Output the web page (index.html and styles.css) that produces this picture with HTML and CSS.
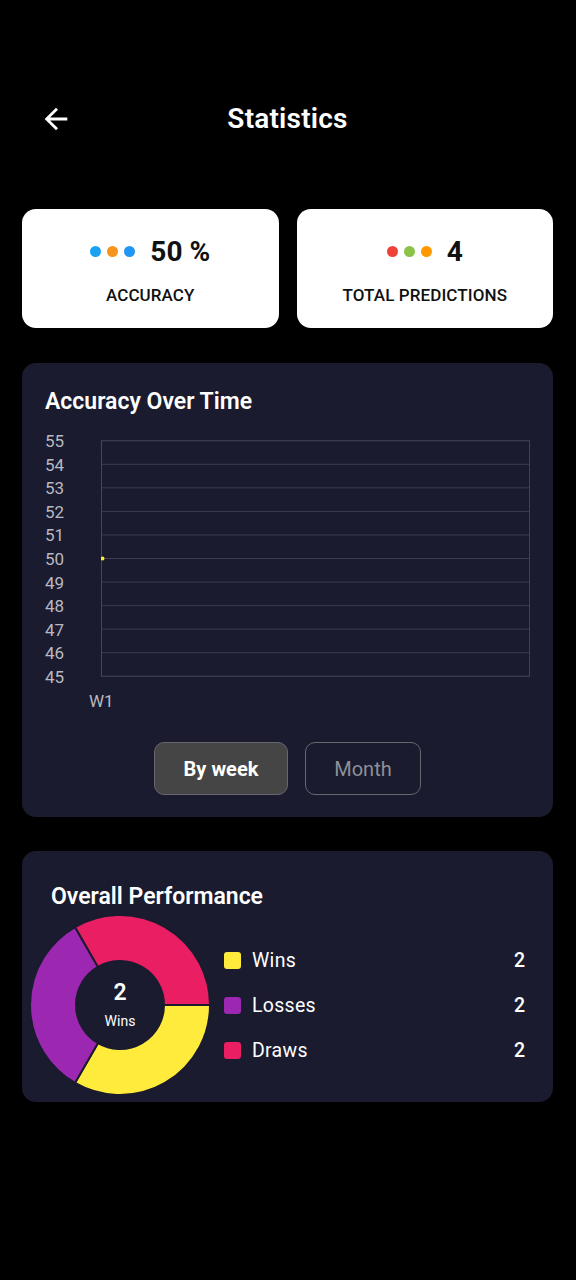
FILE: index.html
```html
<!DOCTYPE html>
<html lang="en">
<head>
    <meta charset="UTF-8">
    <meta name="viewport" content="width=device-width, initial-scale=1.0">
    <title>Statistics</title>
    <link rel="stylesheet" href="styles.css">
</head>
<body>
    <div class="page">
        <header class="topbar">
            <button class="back" aria-label="Back">
                <svg width="34" height="34" viewBox="0 0 24 24"><path fill="#fff" d="M20 11H7.83l5.59-5.59L12 4l-8 8 8 8 1.41-1.41L7.83 13H20v-2z"/></svg>
            </button>
            <h1>Statistics</h1>
        </header>

        <div class="summary">
            <div class="summary-card">
                <div class="summary-value">
                    <span class="dots">
                        <i style="background:#1ba1f2"></i><i style="background:#f7941d"></i><i style="background:#2196f3"></i>
                    </span>
                    <span>50 %</span>
                </div>
                <div class="summary-label">ACCURACY</div>
            </div>
            <div class="summary-card">
                <div class="summary-value">
                    <span class="dots">
                        <i style="background:#f0403a"></i><i style="background:#8bc34a"></i><i style="background:#ff9800"></i>
                    </span>
                    <span>4</span>
                </div>
                <div class="summary-label">TOTAL PREDICTIONS</div>
            </div>
        </div>

        <section class="panel chart-panel">
            <h2>Accuracy Over Time</h2>
            <div class="chart-row">
                <div class="y-axis">
                    <span>55</span><span>54</span><span>53</span><span>52</span><span>51</span><span>50</span><span>49</span><span>48</span><span>47</span><span>46</span><span>45</span>
                </div>
                <svg class="plot" width="430" height="237" viewBox="0 0 430 237">
                    <g stroke="#3b3c52" stroke-width="1">
                        <line x1="0" y1="24.1" x2="430" y2="24.1"/>
                        <line x1="0" y1="47.7" x2="430" y2="47.7"/>
                        <line x1="0" y1="71.3" x2="430" y2="71.3"/>
                        <line x1="0" y1="94.9" x2="430" y2="94.9"/>
                        <line x1="0" y1="118.5" x2="430" y2="118.5"/>
                        <line x1="0" y1="142.1" x2="430" y2="142.1"/>
                        <line x1="0" y1="165.7" x2="430" y2="165.7"/>
                        <line x1="0" y1="189.3" x2="430" y2="189.3"/>
                        <line x1="0" y1="212.9" x2="430" y2="212.9"/>
                    </g>
                    <rect x="0.5" y="0.5" width="429" height="236" fill="none" stroke="#45465a"/>
                    <circle cx="1.5" cy="118.5" r="2" fill="#ffeb3b"/>
                </svg>
            </div>
            <div class="x-axis">W1</div>
            <div class="range">
                <button class="range-btn active">By week</button>
                <button class="range-btn">Month</button>
            </div>
        </section>

        <section class="panel perf-panel">
            <h2>Overall Performance</h2>
            <div class="perf-body">
                <div class="donut">
                    <svg width="182" height="182" viewBox="-1 -1 182 182">
                        <g stroke="#1a1b2e" stroke-width="2">
                            <path fill="#ffeb3b" d="M180 90 A90 90 0 0 1 45 167.94 L68 128.1 A44 44 0 0 0 134 90 Z"/>
                            <path fill="#9c27b0" d="M45 167.94 A90 90 0 0 1 45 12.06 L68 51.9 A44 44 0 0 0 68 128.1 Z"/>
                            <path fill="#e91e63" d="M45 12.06 A90 90 0 0 1 180 90 L134 90 A44 44 0 0 0 68 51.9 Z"/>
                        </g>
                    </svg>
                    <div class="donut-center">
                        <strong>2</strong>
                        <span>Wins</span>
                    </div>
                </div>
                <ul class="legend">
                    <li><i style="background:#ffeb3b"></i><span class="legend-name">Wins</span><span class="legend-val">2</span></li>
                    <li><i style="background:#9c27b0"></i><span class="legend-name">Losses</span><span class="legend-val">2</span></li>
                    <li><i style="background:#e91e63"></i><span class="legend-name">Draws</span><span class="legend-val">2</span></li>
                </ul>
            </div>
        </section>
    </div>
</body>
</html>
```

FILE: styles.css
```css
body {
    margin: 0;
    background-color: #000;
    color: #fff;
    font-family: Roboto, "Noto Sans", Arial, sans-serif;
}
.page {
    padding: 90px 23px 40px 22px;
}
.topbar {
    position: relative;
    height: 56px;
    display: flex;
    align-items: center;
    justify-content: center;
}
.topbar h1 {
    margin: 0;
    font-size: 28px;
    font-weight: 600;
    letter-spacing: 0.2px;
}
.back {
    position: absolute;
    left: 17px;
    top: 12px;
    padding: 0;
    border: 0;
    background: none;
    display: flex;
}
.summary {
    margin-top: 63px;
    display: grid;
    grid-template-columns: 1fr 1fr;
    gap: 18px;
}
.summary-card {
    background-color: #fff;
    color: #111;
    border-radius: 14px;
    height: 119px;
    display: flex;
    flex-direction: column;
    align-items: center;
}
.summary-value {
    margin-top: 26px;
    height: 32px;
    display: flex;
    align-items: center;
    gap: 15px;
    font-size: 28px;
    font-weight: 700;
}
.dots {
    display: flex;
    gap: 6px;
}
.dots i {
    width: 11px;
    height: 11px;
    border-radius: 50%;
}
.summary-label {
    margin-top: 18px;
    font-size: 17px;
    font-weight: 500;
    letter-spacing: 0.1px;
}
.panel {
    background-color: #1a1b2e;
    border-radius: 14px;
}
.panel h2 {
    margin: 0;
    font-size: 23px;
    font-weight: 600;
    line-height: 26px;
}
.chart-panel {
    margin-top: 35px;
    padding: 26px 23px 22px 23px;
}
.chart-row {
    display: flex;
    margin-top: 17px;
}
.y-axis {
    width: 56px;
    height: 254px;
    display: flex;
    flex-direction: column;
    justify-content: space-between;
    font-size: 17px;
    line-height: 18px;
    color: #b8b9c2;
}
.plot {
    margin-top: 8px;
    display: block;
}
.x-axis {
    margin-top: 6px;
    padding-left: 44px;
    font-size: 17px;
    line-height: 18px;
    color: #b8b9c2;
}
.range {
    margin-top: 32px;
    display: flex;
    justify-content: center;
    gap: 17px;
}
.range-btn {
    height: 53px;
    border: 1px solid #66676f;
    border-radius: 10px;
    background: transparent;
    color: #8e8f98;
    font-family: inherit;
    font-size: 20px;
    width: 116px;
}
.range-btn.active {
    width: 134px;
    background-color: #454545;
    color: #fff;
    font-weight: 700;
}
.perf-panel {
    margin-top: 34px;
    padding: 34px 28px 6px 0;
}
.perf-panel h2 {
    padding-left: 29px;
    line-height: 24px;
}
.perf-body {
    margin-top: 5px;
    display: flex;
    align-items: center;
}
.donut {
    position: relative;
    margin-left: 7px;
    width: 182px;
    height: 182px;
}
.donut svg {
    display: block;
}
.donut-center {
    position: absolute;
    left: 0;
    top: 0;
    width: 182px;
    height: 182px;
    display: flex;
    flex-direction: column;
    align-items: center;
    justify-content: center;
}
.donut-center strong {
    font-size: 23px;
    line-height: 26px;
    font-weight: 600;
}
.donut-center span {
    font-size: 14px;
    line-height: 18px;
    margin-top: 6px;
}
.legend {
    list-style: none;
    margin: 0 0 0 13px;
    padding: 0;
    flex: 1;
    display: flex;
    flex-direction: column;
    gap: 22px;
}
.legend li {
    display: flex;
    align-items: center;
    height: 23px;
    font-size: 19.5px;
}
.legend i {
    width: 17px;
    height: 17px;
    border-radius: 3px;
    margin-right: 11px;
}
.legend-name {
    flex: 1;
    letter-spacing: 0.3px;
}
.legend-val {
    font-weight: 500;
}
```
